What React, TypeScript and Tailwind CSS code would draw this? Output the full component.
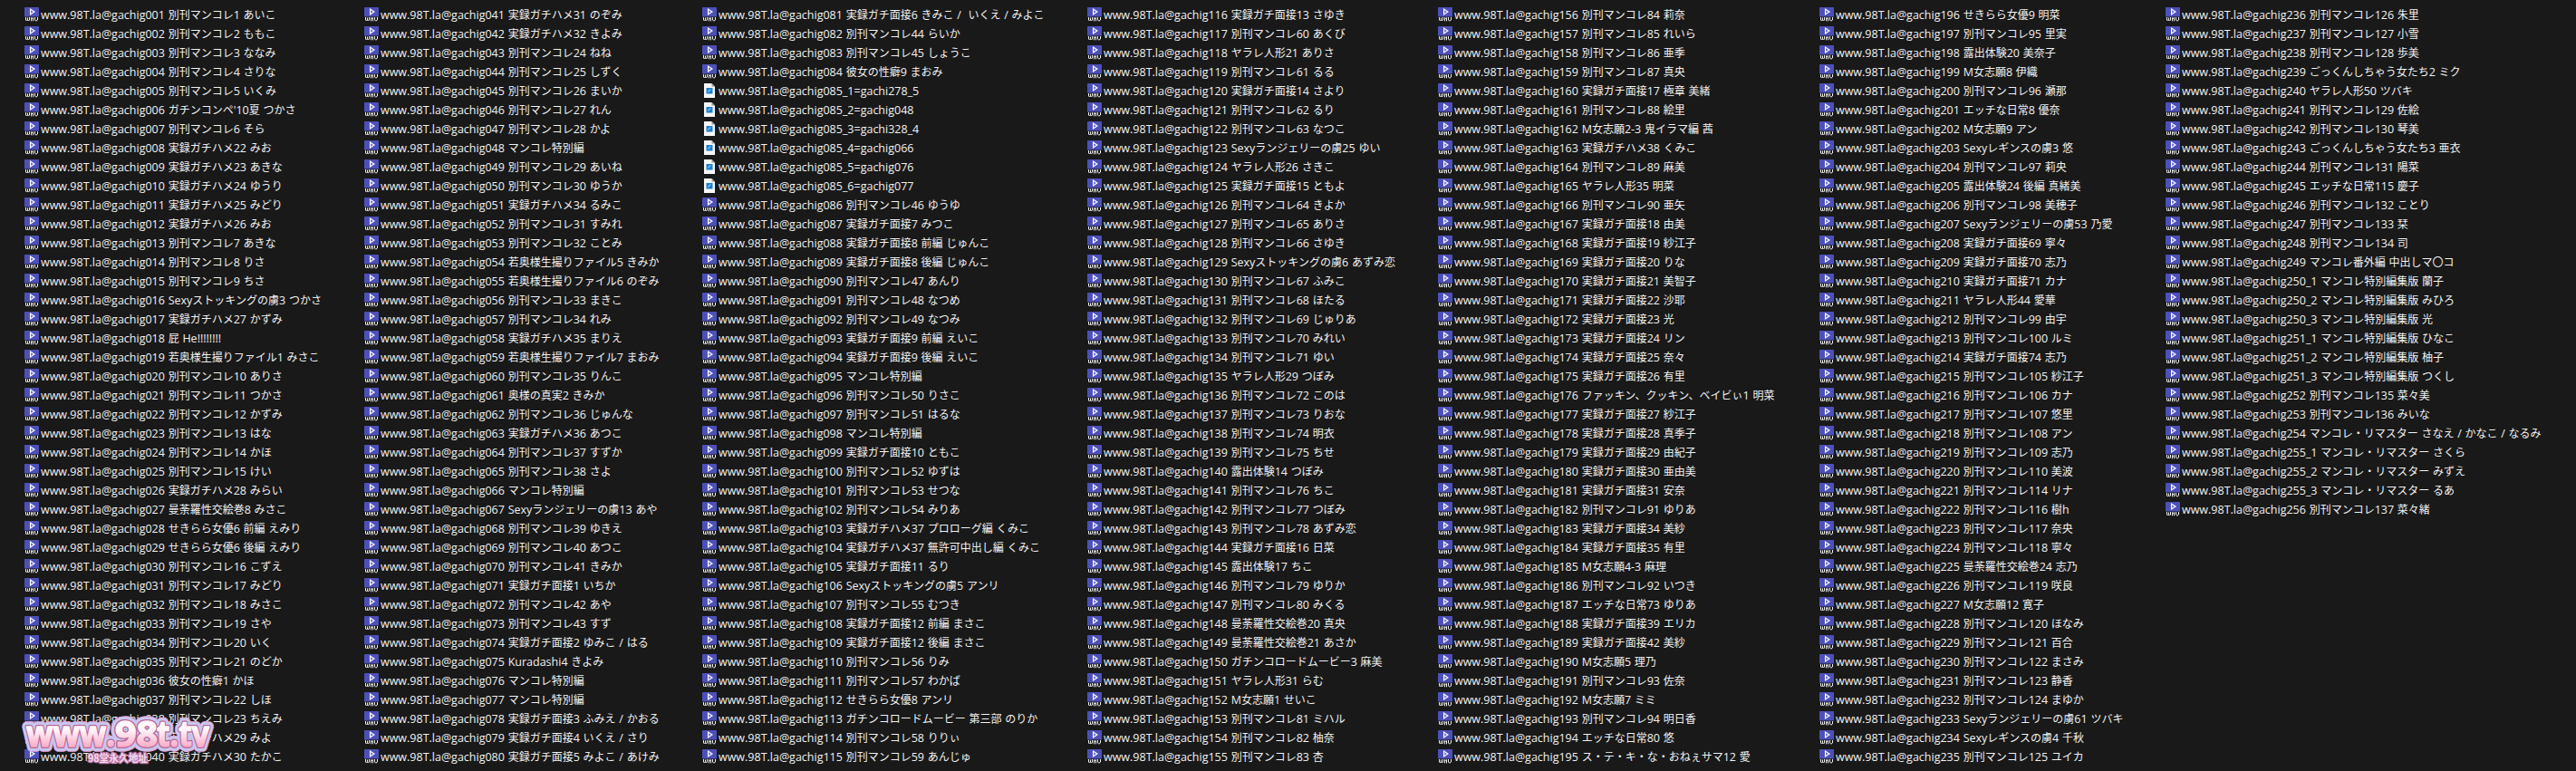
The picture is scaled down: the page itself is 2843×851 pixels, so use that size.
const PREFIX = 'www.98T.la@gachig'

const columns = [
  {
    width: 'w-[375px]',
    files: [
      '001 別刊マンコレ1 あいこ',
      '002 別刊マンコレ2 ももこ',
      '003 別刊マンコレ3 ななみ',
      '004 別刊マンコレ4 さりな',
      '005 別刊マンコレ5 いくみ',
      "006 ガチンコンペ'10夏 つかさ",
      '007 別刊マンコレ6 そら',
      '008 実録ガチハメ22 みお',
      '009 実録ガチハメ23 あきな',
      '010 実録ガチハメ24 ゆうり',
      '011 実録ガチハメ25 みどり',
      '012 実録ガチハメ26 みお',
      '013 別刊マンコレ7 あきな',
      '014 別刊マンコレ8 りさ',
      '015 別刊マンコレ9 ちさ',
      '016 Sexyストッキングの虜3 つかさ',
      '017 実録ガチハメ27 かずみ',
      '018 屁 He!!!!!!!!',
      '019 若奥様生撮りファイル1 みさこ',
      '020 別刊マンコレ10 ありさ',
      '021 別刊マンコレ11 つかさ',
      '022 別刊マンコレ12 かずみ',
      '023 別刊マンコレ13 はな',
      '024 別刊マンコレ14 かほ',
      '025 別刊マンコレ15 けい',
      '026 実録ガチハメ28 みらい',
      '027 曼荼羅性交絵巻8 みさこ',
      '028 せきらら女優6 前編 えみり',
      '029 せきらら女優6 後編 えみり',
      '030 別刊マンコレ16 こずえ',
      '031 別刊マンコレ17 みどり',
      '032 別刊マンコレ18 みさこ',
      '033 別刊マンコレ19 さや',
      '034 別刊マンコレ20 いく',
      '035 別刊マンコレ21 のどか',
      '036 彼女の性癖1 かほ',
      '037 別刊マンコレ22 しほ',
      '038 別刊マンコレ23 ちえみ',
      '039 実録ガチハメ29 みよ',
      '040 実録ガチハメ30 たかこ',
    ],
  },
  {
    width: 'w-[373px]',
    files: [
      '041 実録ガチハメ31 のぞみ',
      '042 実録ガチハメ32 きよみ',
      '043 別刊マンコレ24 ねね',
      '044 別刊マンコレ25 しずく',
      '045 別刊マンコレ26 まいか',
      '046 別刊マンコレ27 れん',
      '047 別刊マンコレ28 かよ',
      '048 マンコレ特別編',
      '049 別刊マンコレ29 あいね',
      '050 別刊マンコレ30 ゆうか',
      '051 実録ガチハメ34 るみこ',
      '052 別刊マンコレ31 すみれ',
      '053 別刊マンコレ32 ことみ',
      '054 若奥様生撮りファイル5 きみか',
      '055 若奥様生撮りファイル6 のぞみ',
      '056 別刊マンコレ33 まきこ',
      '057 別刊マンコレ34 れみ',
      '058 実録ガチハメ35 まりえ',
      '059 若奥様生撮りファイル7 まおみ',
      '060 別刊マンコレ35 りんこ',
      '061 奥様の真実2 きみか',
      '062 別刊マンコレ36 じゅんな',
      '063 実録ガチハメ36 あつこ',
      '064 別刊マンコレ37 すずか',
      '065 別刊マンコレ38 さよ',
      '066 マンコレ特別編',
      '067 Sexyランジェリーの虜13 あや',
      '068 別刊マンコレ39 ゆきえ',
      '069 別刊マンコレ40 あつこ',
      '070 別刊マンコレ41 きみか',
      '071 実録ガチ面接1 いちか',
      '072 別刊マンコレ42 あや',
      '073 別刊マンコレ43 すず',
      '074 実録ガチ面接2 ゆみこ / はる',
      '075 Kuradashi4 きよみ',
      '076 マンコレ特別編',
      '077 マンコレ特別編',
      '078 実録ガチ面接3 ふみえ / かおる',
      '079 実録ガチ面接4 いくえ / さり',
      '080 実録ガチ面接5 みよこ / あけみ',
    ],
  },
  {
    width: 'w-[425px]',
    files: [
      '081 実録ガチ面接6 きみこ /  いくえ / みよこ',
      '082 別刊マンコレ44 らいか',
      '083 別刊マンコレ45 しょうこ',
      '084 彼女の性癖9 まおみ',
      '085_1=gachi278_5',
      '085_2=gachig048',
      '085_3=gachi328_4',
      '085_4=gachig066',
      '085_5=gachig076',
      '085_6=gachig077',
      '086 別刊マンコレ46 ゆうゆ',
      '087 実録ガチ面接7 みつこ',
      '088 実録ガチ面接8 前編 じゅんこ',
      '089 実録ガチ面接8 後編 じゅんこ',
      '090 別刊マンコレ47 あんり',
      '091 別刊マンコレ48 なつめ',
      '092 別刊マンコレ49 なつみ',
      '093 実録ガチ面接9 前編 えいこ',
      '094 実録ガチ面接9 後編 えいこ',
      '095 マンコレ特別編',
      '096 別刊マンコレ50 りさこ',
      '097 別刊マンコレ51 はるな',
      '098 マンコレ特別編',
      '099 実録ガチ面接10 ともこ',
      '100 別刊マンコレ52 ゆずは',
      '101 別刊マンコレ53 せつな',
      '102 別刊マンコレ54 みりあ',
      '103 実録ガチハメ37 プロローグ編 くみこ',
      '104 実録ガチハメ37 無許可中出し編 くみこ',
      '105 実録ガチ面接11 るり',
      '106 Sexyストッキングの虜5 アンリ',
      '107 別刊マンコレ55 むつき',
      '108 実録ガチ面接12 前編 まさこ',
      '109 実録ガチ面接12 後編 まさこ',
      '110 別刊マンコレ56 りみ',
      '111 別刊マンコレ57 わかば',
      '112 せきらら女優8 アンリ',
      '113 ガチンコロードムービー 第三部 のりか',
      '114 別刊マンコレ58 りりぃ',
      '115 別刊マンコレ59 あんじゅ',
    ],
  },
  {
    width: 'w-[387px]',
    files: [
      '116 実録ガチ面接13 さゆき',
      '117 別刊マンコレ60 あくび',
      '118 ヤラレ人形21 ありさ',
      '119 別刊マンコレ61 るる',
      '120 実録ガチ面接14 さより',
      '121 別刊マンコレ62 るり',
      '122 別刊マンコレ63 なつこ',
      '123 Sexyランジェリーの虜25 ゆい',
      '124 ヤラレ人形26 さきこ',
      '125 実録ガチ面接15 ともよ',
      '126 別刊マンコレ64 きよか',
      '127 別刊マンコレ65 ありさ',
      '128 別刊マンコレ66 さゆき',
      '129 Sexyストッキングの虜6 あずみ恋',
      '130 別刊マンコレ67 ふみこ',
      '131 別刊マンコレ68 ほたる',
      '132 別刊マンコレ69 じゅりあ',
      '133 別刊マンコレ70 みれい',
      '134 別刊マンコレ71 ゆい',
      '135 ヤラレ人形29 つぼみ',
      '136 別刊マンコレ72 このは',
      '137 別刊マンコレ73 りおな',
      '138 別刊マンコレ74 明衣',
      '139 別刊マンコレ75 ちせ',
      '140 露出体験14 つぼみ',
      '141 別刊マンコレ76 ちこ',
      '142 別刊マンコレ77 つぼみ',
      '143 別刊マンコレ78 あずみ恋',
      '144 実録ガチ面接16 日菜',
      '145 露出体験17 ちこ',
      '146 別刊マンコレ79 ゆりか',
      '147 別刊マンコレ80 みくる',
      '148 曼荼羅性交絵巻20 真央',
      '149 曼荼羅性交絵巻21 あさか',
      '150 ガチンコロードムービー3 麻美',
      '151 ヤラレ人形31 らむ',
      '152 M女志願1 せいこ',
      '153 別刊マンコレ81 ミハル',
      '154 別刊マンコレ82 柚奈',
      '155 別刊マンコレ83 杏',
    ],
  },
  {
    width: 'w-[421px]',
    files: [
      '156 別刊マンコレ84 莉奈',
      '157 別刊マンコレ85 れいら',
      '158 別刊マンコレ86 亜季',
      '159 別刊マンコレ87 真央',
      '160 実録ガチ面接17 極章 美緒',
      '161 別刊マンコレ88 絵里',
      '162 M女志願2-3 鬼イラマ編 茜',
      '163 実録ガチハメ38 くみこ',
      '164 別刊マンコレ89 麻美',
      '165 ヤラレ人形35 明菜',
      '166 別刊マンコレ90 亜矢',
      '167 実録ガチ面接18 由美',
      '168 実録ガチ面接19 紗江子',
      '169 実録ガチ面接20 りな',
      '170 実録ガチ面接21 美智子',
      '171 実録ガチ面接22 沙耶',
      '172 実録ガチ面接23 光',
      '173 実録ガチ面接24 リン',
      '174 実録ガチ面接25 奈々',
      '175 実録ガチ面接26 有里',
      '176 ファッキン、クッキン、ベイビぃ1 明菜',
      '177 実録ガチ面接27 紗江子',
      '178 実録ガチ面接28 真季子',
      '179 実録ガチ面接29 由紀子',
      '180 実録ガチ面接30 亜由美',
      '181 実録ガチ面接31 安奈',
      '182 別刊マンコレ91 ゆりあ',
      '183 実録ガチ面接34 美紗',
      '184 実録ガチ面接35 有里',
      '185 M女志願4-3 麻理',
      '186 別刊マンコレ92 いつき',
      '187 エッチな日常73 ゆりあ',
      '188 実録ガチ面接39 エリカ',
      '189 実録ガチ面接42 美紗',
      '190 M女志願5 理乃',
      '191 別刊マンコレ93 佐奈',
      '192 M女志願7 ミミ',
      '193 別刊マンコレ94 明日香',
      '194 エッチな日常80 悠',
      '195 ス・テ・キ・な・おねぇサマ12 愛',
    ],
  },
  {
    width: 'w-[382px]',
    files: [
      '196 せきらら女優9 明菜',
      '197 別刊マンコレ95 里実',
      '198 露出体験20 美奈子',
      '199 M女志願8 伊織',
      '200 別刊マンコレ96 瀬那',
      '201 エッチな日常8 優奈',
      '202 M女志願9 アン',
      '203 Sexyレギンスの虜3 悠',
      '204 別刊マンコレ97 莉央',
      '205 露出体験24 後編 真緒美',
      '206 別刊マンコレ98 美穂子',
      '207 Sexyランジェリーの虜53 乃愛',
      '208 実録ガチ面接69 寧々',
      '209 実録ガチ面接70 志乃',
      '210 実録ガチ面接71 カナ',
      '211 ヤラレ人形44 愛華',
      '212 別刊マンコレ99 由宇',
      '213 別刊マンコレ100 ルミ',
      '214 実録ガチ面接74 志乃',
      '215 別刊マンコレ105 紗江子',
      '216 別刊マンコレ106 カナ',
      '217 別刊マンコレ107 悠里',
      '218 別刊マンコレ108 アン',
      '219 別刊マンコレ109 志乃',
      '220 別刊マンコレ110 美波',
      '221 別刊マンコレ114 リナ',
      '222 別刊マンコレ116 樹h',
      '223 別刊マンコレ117 奈央',
      '224 別刊マンコレ118 寧々',
      '225 曼荼羅性交絵巻24 志乃',
      '226 別刊マンコレ119 咲良',
      '227 M女志願12 寛子',
      '228 別刊マンコレ120 ほなみ',
      '229 別刊マンコレ121 百合',
      '230 別刊マンコレ122 まさみ',
      '231 別刊マンコレ123 静香',
      '232 別刊マンコレ124 まゆか',
      '233 Sexyランジェリーの虜61 ツバキ',
      '234 Sexyレギンスの虜4 千秋',
      '235 別刊マンコレ125 ユイカ',
    ],
  },
  {
    width: 'w-[453px]',
    files: [
      '236 別刊マンコレ126 朱里',
      '237 別刊マンコレ127 小雪',
      '238 別刊マンコレ128 歩美',
      '239 ごっくんしちゃう女たち2 ミク',
      '240 ヤラレ人形50 ツバキ',
      '241 別刊マンコレ129 佐絵',
      '242 別刊マンコレ130 琴美',
      '243 ごっくんしちゃう女たち3 亜衣',
      '244 別刊マンコレ131 陽菜',
      '245 エッチな日常115 慶子',
      '246 別刊マンコレ132 ことり',
      '247 別刊マンコレ133 栞',
      '248 別刊マンコレ134 司',
      '249 マンコレ番外編 中出しマ〇コ',
      '250_1 マンコレ特別編集版 蘭子',
      '250_2 マンコレ特別編集版 みひろ',
      '250_3 マンコレ特別編集版 光',
      '251_1 マンコレ特別編集版 ひなこ',
      '251_2 マンコレ特別編集版 柚子',
      '251_3 マンコレ特別編集版 つくし',
      '252 別刊マンコレ135 菜々美',
      '253 別刊マンコレ136 みいな',
      '254 マンコレ・リマスター さなえ / かなこ / なるみ',
      '255_1 マンコレ・リマスター さくら',
      '255_2 マンコレ・リマスター みずえ',
      '255_3 マンコレ・リマスター るあ',
      '256 別刊マンコレ137 菜々緒',
    ],
  },
]

function WmvIcon() {
  return (
    <svg className="mt-0.5 w-4 h-4 shrink-0" viewBox="0 0 16 16">
      <rect width="16" height="10.5" rx="0.6" fill="#4d50b8" />
      <path d="M6.5 2v6l4.5-3z" fill="#6f72d6" stroke="#fff" strokeWidth="1.1" />
      <path
        d="M1.5 11v3l1 1 1-1 1 1 1-1v-3M3.5 11.5v2.5M7.5 15.3v-3.8l1 .8 1-.8v3.8M11.5 11v3l1.2 1.2 1.8-1.2v-3"
        fill="none"
        stroke="#f0f0f0"
        strokeWidth="1"
      />
    </svg>
  )
}

function LinkIcon() {
  return (
    <svg className="mt-0.5 w-4 h-4 shrink-0" viewBox="0 0 16 16">
      <path d="M2 0h8.5l3.5 3.5V16H2z" fill="#f7f7f7" />
      <path d="M10.5 0v3.5H14z" fill="#9a9a9a" />
      <rect x="4.5" y="5" width="7" height="6.5" rx="0.5" fill="#1c7fd0" />
      <path d="M6 9.5l3.5-3" stroke="#7cc4f5" strokeWidth="1.2" />
    </svg>
  )
}

function FileName({ name }: { name: string }) {
  // latin runs are set slightly larger than the kana and kanji around them
  const parts = (PREFIX + name).match(/[\x20-\x7e]+|[^\x20-\x7e]+/g) ?? []
  return (
    <span className="ml-0.5 whitespace-pre">
      {parts.map((part, i) => (
        <span key={i} className={/^[\x20-\x7e]/.test(part) ? 'text-[12.5px] [word-spacing:0.5px]' : ''}>
          {part}
        </span>
      ))}
    </span>
  )
}

function LogoText({ className, stroke, strokeWidth, fill }: { className?: string; stroke?: string; strokeWidth?: number; fill: string }) {
  return (
    <g className={className} fill={fill} stroke={stroke} strokeWidth={strokeWidth}>
      <text x="9" y="39" textLength="98" lengthAdjust="spacingAndGlyphs">www.</text>
      <text x="107" y="39" textLength="47" lengthAdjust="spacingAndGlyphs">98</text>
      <text x="153" y="39" textLength="58" lengthAdjust="spacingAndGlyphs">t.tv</text>
    </g>
  )
}

export default function App() {
  return (
    <div className="relative w-[2843px] h-[851px] overflow-hidden bg-[#191919] pt-[6px] pl-[27px] font-['Open_Sans','Noto_Sans_CJK_JP',sans-serif] text-[12px] text-[#f2f2f2]">
      <div className="flex">
        {columns.map((column) => (
          <ul key={column.width} className={`${column.width} shrink-0`}>
            {column.files.map((file) => (
              <li key={file} className="flex h-[21px] leading-[21px]">
                {file.includes('=') ? <LinkIcon /> : <WmvIcon />}
                <FileName name={file} />
              </li>
            ))}
          </ul>
        ))}
      </div>

      {/* Watermark */}
      <svg className="absolute left-[20px] top-[785px] w-[225px] h-[66px]" viewBox="0 0 225 66">
        <defs>
          <linearGradient id="pink" gradientUnits="userSpaceOnUse" x1="0" y1="10" x2="0" y2="40">
            <stop offset="0.35" stopColor="#fff6fa" />
            <stop offset="1" stopColor="#f7a9c6" />
          </linearGradient>
        </defs>
        <g fontFamily="Open Sans, sans-serif" fontWeight="700" fontSize="39" strokeLinejoin="round">
          <LogoText fill="none" stroke="#e3a5da" strokeWidth={11.5} />
          <LogoText fill="none" stroke="#c6c8f0" strokeWidth={9.5} />
          <LogoText fill="none" stroke="#b9628f" strokeWidth={4} />
          <LogoText fill="url(#pink)" stroke="url(#pink)" strokeWidth={1.5} />
        </g>
        <text
          x="77"
          y="56"
          textLength="66"
          lengthAdjust="spacingAndGlyphs"
          fontFamily="Noto Sans CJK SC, sans-serif"
          fontWeight="700"
          fontSize="11"
          fill="#f6dcec"
          stroke="#b873a6"
          strokeWidth="2.5"
          strokeLinejoin="round"
          paintOrder="stroke"
        >
          98堂永久地址
        </text>
      </svg>
    </div>
  )
}
